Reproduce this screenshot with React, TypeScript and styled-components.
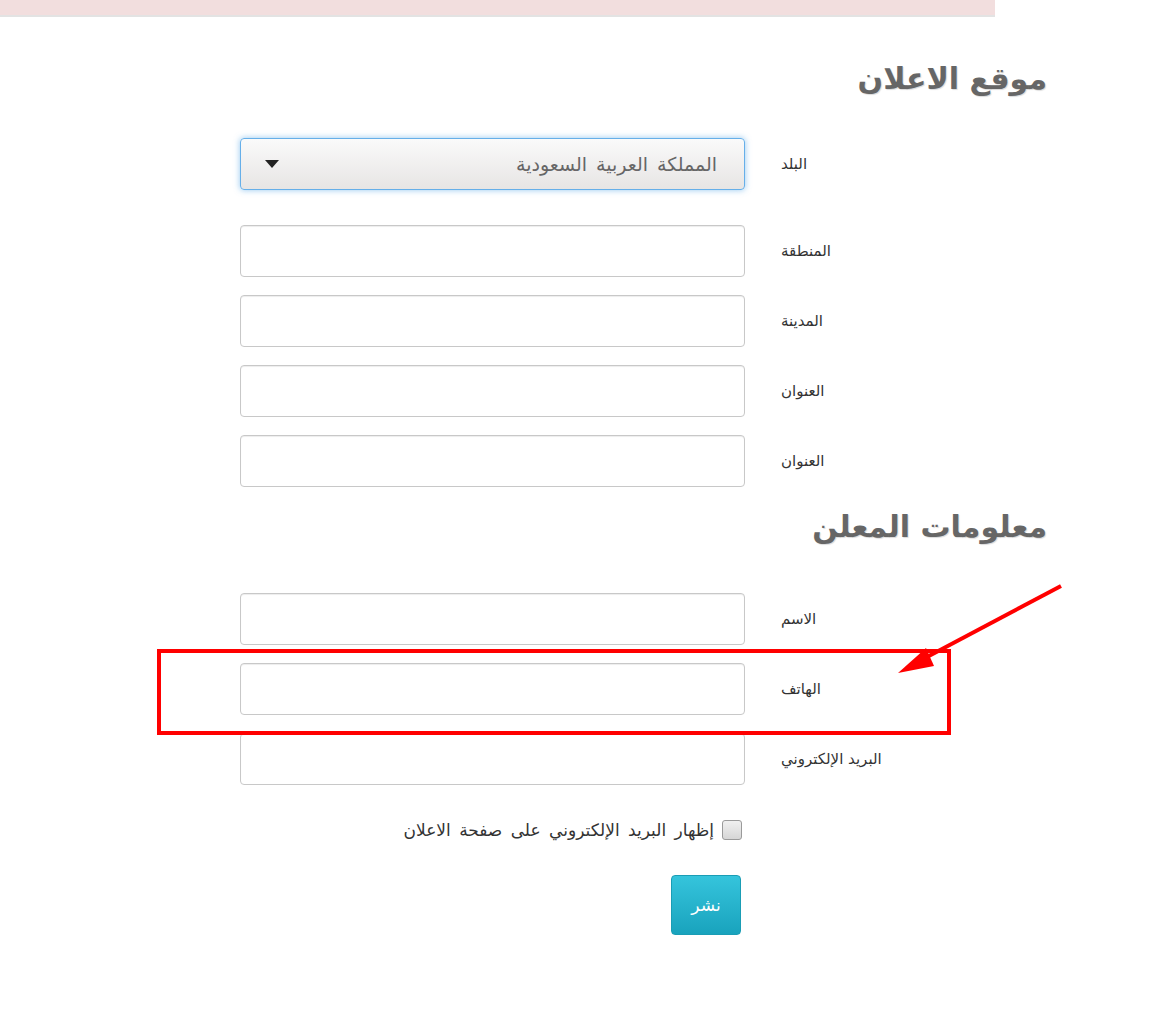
import styled, { createGlobalStyle } from "styled-components";

const GlobalStyle = createGlobalStyle`
  html, body {
    margin: 0;
    padding: 0;
    background: #fff;
    font-family: "DejaVu Sans", "Liberation Sans", sans-serif;
  }
`;

const Page = styled.div`
  position: relative;
  width: 1170px;
  height: 1024px;
  overflow: hidden;
`;

const TopBar = styled.div`
  width: 995px;
  height: 15px;
  background: #f2dede;
  border-bottom: 2px solid #e3e3e3;
`;

const Form = styled.form`
  margin-left: 240px;
  width: 807px;
  display: flex;
  flex-direction: column;
`;

const Heading = styled.h2<{ top: number }>`
  margin: ${(p) => p.top}px 0 0;
  text-align: right;
  direction: rtl;
  font-size: 30px;
  font-weight: bold;
  line-height: 44px;
  color: #666;
  text-shadow: 1px 1px 1px rgba(0, 0, 0, 0.15);
`;

const Fields = styled.div<{ top: number }>`
  margin-top: ${(p) => p.top}px;
  display: flex;
  flex-direction: column;
  gap: 18px;
`;

const Row = styled.div<{ after?: number }>`
  display: flex;
  align-items: center;
  height: 52px;
  margin-bottom: ${(p) => p.after ?? 0}px;
`;

const Label = styled.label`
  padding-left: 36px;
  font-size: 15px;
  color: #333;
  direction: rtl;
`;

const Input = styled.input`
  box-sizing: border-box;
  width: 505px;
  height: 52px;
  border: 1px solid #c8c8c8;
  border-radius: 4px;
  box-shadow: inset 0 1px 1px rgba(0, 0, 0, 0.075);
  background: #fff;
`;

const Select = styled.div`
  box-sizing: border-box;
  width: 505px;
  height: 52px;
  border: 1px solid #66afe9;
  border-radius: 4px;
  box-shadow: 0 0 6px rgba(102, 175, 233, 0.7);
  background: linear-gradient(#fafafa, #e7e5e4);
  display: flex;
  align-items: center;
  justify-content: space-between;
  padding: 0 27px 0 24px;
  color: #666;
  font-size: 19px;
  word-spacing: 3px;
`;

const Caret = styled.span`
  width: 0;
  height: 0;
  border-left: 7px solid transparent;
  border-right: 7px solid transparent;
  border-top: 8px solid #222;
`;

const SelectText = styled.span`
  direction: rtl;
`;

const CheckRow = styled.div`
  margin-top: 35px;
  width: 505px;
  display: flex;
  justify-content: flex-end;
  align-items: center;
  gap: 8px;
  font-size: 17px;
  word-spacing: 3px;
  color: #333;
`;

const CheckText = styled.span`
  direction: rtl;
`;

const Box = styled.span`
  box-sizing: border-box;
  width: 20px;
  height: 20px;
  border: 1px solid #9a9a9a;
  border-radius: 3px;
  background: linear-gradient(#f0f0f0, #d6d6d6);
  margin-right: 3px;
`;

const ButtonWrap = styled.div`
  margin-top: 35px;
  width: 501px;
  display: flex;
  justify-content: flex-end;
`;

const Submit = styled.button`
  width: 70px;
  height: 60px;
  border: 1px solid #1a9db5;
  border-radius: 4px;
  background: linear-gradient(#35c4dc, #19a3bd);
  color: #fff;
  font-family: "DejaVu Sans", sans-serif;
  font-size: 17px;
`;

const Highlight = styled.div`
  position: absolute;
  left: 157px;
  top: 649px;
  width: 786px;
  height: 78px;
  border: 4px solid #ff0000;
`;

const Arrow = styled.svg`
  position: absolute;
  left: 880px;
  top: 570px;
`;

const first = ["المنطقة", "المدينة", "العنوان", "العنوان"];
const second = ["الاسم", "الهاتف", "البريد الإلكتروني"];

export default function App() {
  return (
    <Page>
      <GlobalStyle />
      <TopBar />
      <Form>
        <Heading top={40}>موقع الاعلان</Heading>
        <Fields top={37}>
          <Row after={17}>
            <Select>
              <Caret />
              <SelectText>المملكة العربية السعودية</SelectText>
            </Select>
            <Label>البلد</Label>
          </Row>
          {first.map((l, i) => (
            <Row key={i}>
              <Input />
              <Label>{l}</Label>
            </Row>
          ))}
        </Fields>
        <Heading top={18}>معلومات المعلن</Heading>
        <Fields top={44}>
          {second.map((l, i) => (
            <Row key={i}>
              <Input />
              <Label>{l}</Label>
            </Row>
          ))}
        </Fields>
        <CheckRow>
          <CheckText>إظهار البريد الإلكتروني على صفحة الاعلان</CheckText>
          <Box />
        </CheckRow>
        <ButtonWrap>
          <Submit type="button">نشر</Submit>
        </ButtonWrap>
      </Form>
      <Highlight />
      <Arrow width="200" height="120" viewBox="0 0 200 120">
        <line x1="181" y1="16" x2="30" y2="96" stroke="#ff0000" strokeWidth="4" />
        <polygon points="18,103 46,78 54,96" fill="#ff0000" />
      </Arrow>
    </Page>
  );
}
